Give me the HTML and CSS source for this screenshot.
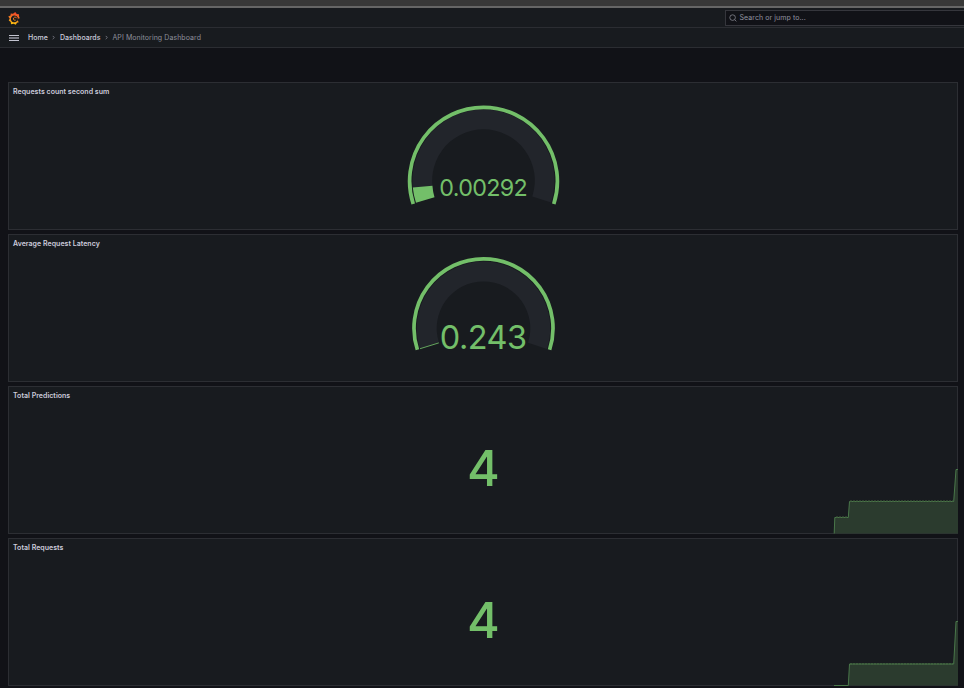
FILE: index.html
```html
<!DOCTYPE html>
<html lang="en">
<head>
<meta charset="utf-8">
<title>API Monitoring Dashboard</title>
<link rel="stylesheet" href="styles.css">
</head>
<body>
<div class="window-edge"></div>
<header class="topbar">
  <svg class="logo" width="12" height="13" viewBox="0 0 24 26">
    <defs><linearGradient id="flame" gradientUnits="userSpaceOnUse" x1="8" y1="24" x2="13" y2="2"><stop offset="0" stop-color="#fcc40c"/><stop offset=".4" stop-color="#f48a20"/><stop offset="1" stop-color="#ee4a28"/></linearGradient></defs>
    <path fill="url(#flame)" fill-rule="evenodd" d="M14.500 0L17.500 4L22 4.500L22 8.500L23.500 12.500L20.500 13L19.500 17L21.500 20.500L18 21.500L15.500 25.500L11.500 23.500L6 24.500L5.500 20L1.500 17L3.500 13L0.500 9L5 7L5.500 3L10 3.500ZM13 7A6.800 6.800 0 1 0 17.500 18.500A7 7 0 0 0 20 12A7 7 0 0 0 13 7Z"/>
    <path fill="none" stroke="url(#flame)" stroke-width="1.900" stroke-linecap="round" d="M17.500 12C16 9.500 12.500 9.500 11 12C10 15 12 17 14.500 16.500"/>
  </svg>
  <div class="search">
    <svg width="8" height="8" viewBox="0 0 8 8"><circle cx="3.600" cy="3.600" r="2.800"/><path d="M5.700 5.700L7.400 7.400"/></svg>
    <span>Search or jump to...</span>
  </div>
</header>
<nav class="crumbs">
  <div class="menu"><i></i><i></i><i></i></div>
  <span>Home</span>
  <svg class="chev" width="3" height="5" viewBox="0 0 3 5"><path d="M.7.9L2.300 2.500L.7 4.100"/></svg>
  <span>Dashboards</span>
  <svg class="chev" width="3" height="5" viewBox="0 0 3 5"><path d="M.7.9L2.300 2.500L.7 4.100"/></svg>
  <span class="current">API Monitoring Dashboard</span>
</nav>
<main class="panels">
  <section class="panel">
    <h2>Requests count second sum</h2>
    <svg class="viz" width="950" height="148" viewBox="8 82 950 148">
      <path class="track" d="M415.970 202.540A71 71 0 1 1 551.030 202.540L532.290 196.450A51.300 51.300 0 1 0 434.710 196.450Z"/>
      <path class="fill" d="M415.970 202.740A71 71 0 0 1 412.800 187.600L432.400 185.800A51.300 51.300 0 0 0 434.500 197.200Z"/>
      <path class="limit" d="M413.210 204.040A73.900 73.900 0 1 1 553.790 204.040"/>
      <text class="value" x="483.500" y="195.500" font-size="23.300" textLength="88.300">0.00292</text>
    </svg>
  </section>
  <section class="panel">
    <h2>Average Request Latency</h2>
    <svg class="viz" width="950" height="148" viewBox="8 234 950 148">
      <path class="track" d="M420.060 348.910A66.700 66.700 0 1 1 546.940 348.910L528.010 342.760A46.800 46.800 0 1 0 438.990 342.760Z"/>
      <path class="needle" d="M420.060 348.700L438.800 342.900"/>
      <path class="limit" d="M417.400 349.780A69.500 69.500 0 1 1 549.600 349.780"/>
      <text class="value" x="483.500" y="348.600" font-size="32.500" textLength="87.300">0.243</text>
    </svg>
  </section>
  <section class="panel">
    <h2>Total Predictions</h2>
    <svg class="viz" width="950" height="148" viewBox="8 386 950 148">
      <path class="area" d="M834 533.500L834.800 517.500H848.300L849.500 501.500H953.700L956 469.500H958V533.500Z"/>
      <path class="line" d="M834.200 533.500L834.800 517.500H848.300L849.500 501.500H953.700L956 469.500H958"/>
      <path class="ticks" d="M836 517.200H848M850 501.200H953"/>
      <text class="value big" x="483.500" y="486" font-size="50">4</text>
    </svg>
  </section>
  <section class="panel">
    <h2>Total Requests</h2>
    <svg class="viz" width="950" height="148" viewBox="8 538 950 148">
      <path class="area" d="M848.300 685.500L849.500 664H953.700L956 621.500H958V685.500Z"/>
      <path class="line" d="M834 685.500H848.300L849.500 664H953.700L956 621.500H958"/>
      <path class="ticks" d="M850 664H953"/>
      <text class="value big" x="483.500" y="638" font-size="50">4</text>
    </svg>
  </section>
</main>
</body>
</html>
```
FILE: styles.css
```css
* { box-sizing: border-box; }
body {
  margin: 0;
  height: 688px;
  overflow: hidden;
  background: #111217;
  color: #ccccdc;
  font-family: Inter, "Liberation Sans", sans-serif;
  font-size: 7px;
}
.window-edge { height: 8px; background: #383838; border-bottom: 2px solid #666; }
.topbar, .crumbs {
  display: flex;
  align-items: center;
  height: 20px;
  background: #181b1f;
  border-bottom: 1px solid #2b2d32;
}
.topbar { justify-content: space-between; padding-left: 8px; }
.logo { margin-top: 1px; }
.search {
  display: flex;
  align-items: center;
  gap: 2.5px;
  width: 239px;
  height: 16px;
  padding-left: 3px;
  background: #111217;
  border: 1px solid #35363c;
  border-right: 0;
  color: #9192a0;
  letter-spacing: .08px;
}
.search svg { fill: none; stroke: #85868f; stroke-width: .8; }
.crumbs { padding-left: 9px; }
.menu { display: flex; flex-direction: column; gap: 1px; width: 10px; margin-right: 9px; }
.menu i { height: 1px; background: #c3c4d0; }
.menu i:nth-child(2) { height: 2px; background: #777982; }
.crumbs span { font-weight: 500; letter-spacing: .03px; }
.crumbs .current { color: #8e8f9b; font-weight: 400; letter-spacing: .07px; }
.chev { margin: 0 4.5px; fill: none; stroke: #858690; stroke-width: .8; }
.panels { display: grid; gap: 4px; padding: 34px 6px 0 8px; }
.panel {
  display: grid;
  height: 148px;
  background: #181b1f;
  box-shadow: inset 0 0 0 1px #2c2e33;
}
.panel h2, .viz { grid-area: 1 / 1; }
.panel h2 { margin: 5px; font-size: 7px; line-height: 9px; font-weight: 600; letter-spacing: .03px; }
.viz { display: block; }
.track { fill: #22252b; }
.fill { fill: #73bf69; }
.limit { fill: none; stroke: #73bf69; stroke-width: 3.7; }
.needle { stroke: #64a55d; stroke-width: 1; }
.area { fill: #2b3b2e; }
.line { fill: none; stroke: #49774a; stroke-width: 1; }
.ticks { fill: none; stroke: #42633f; stroke-width: 1.6; stroke-dasharray: 2 1; }
.value { fill: #73bf69; text-anchor: middle; }
.big { font-weight: 500; }
```
